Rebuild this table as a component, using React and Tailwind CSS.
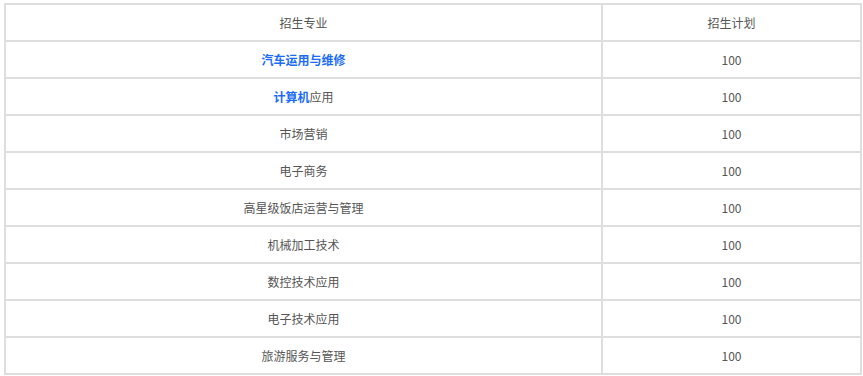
import React from 'react';

const rows = [
  { name: '汽车运用与维修', plan: '100', hl: 'all' },
  { name: '计算机应用', plan: '100', hl: 'part' },
  { name: '市场营销', plan: '100' },
  { name: '电子商务', plan: '100' },
  { name: '高星级饭店运营与管理', plan: '100' },
  { name: '机械加工技术', plan: '100' },
  { name: '数控技术应用', plan: '100' },
  { name: '电子技术应用', plan: '100' },
  { name: '旅游服务与管理', plan: '100' },
];

const Cell = ({ children }) => (
  <div className="bg-white flex items-center justify-center text-[12px] text-[#555555]">
    {children}
  </div>
);

const App = () => {
  return (
    <div
      className="w-[863px] h-[376px] bg-white pt-[3px] pl-[4px]"
      style={{ fontFamily: '"Microsoft YaHei", "Noto Sans CJK SC", "Noto Sans", sans-serif' }}
    >
      <div className="grid grid-cols-[595px_257px] auto-rows-[35px] gap-[2px] p-[2px] bg-[#dedede] w-[858px]">
        <Cell>招生专业</Cell>
        <Cell>招生计划</Cell>
        {rows.map((r) => (
          <React.Fragment key={r.name}>
            <Cell>
              {r.hl === 'all' && <span className="text-[#1a6cf7] font-bold">{r.name}</span>}
              {r.hl === 'part' && (
                <span>
                  <span className="text-[#1a6cf7] font-bold">计算机</span>应用
                </span>
              )}
              {!r.hl && r.name}
            </Cell>
            <Cell>{r.plan}</Cell>
          </React.Fragment>
        ))}
      </div>
    </div>
  );
};

export default App;
